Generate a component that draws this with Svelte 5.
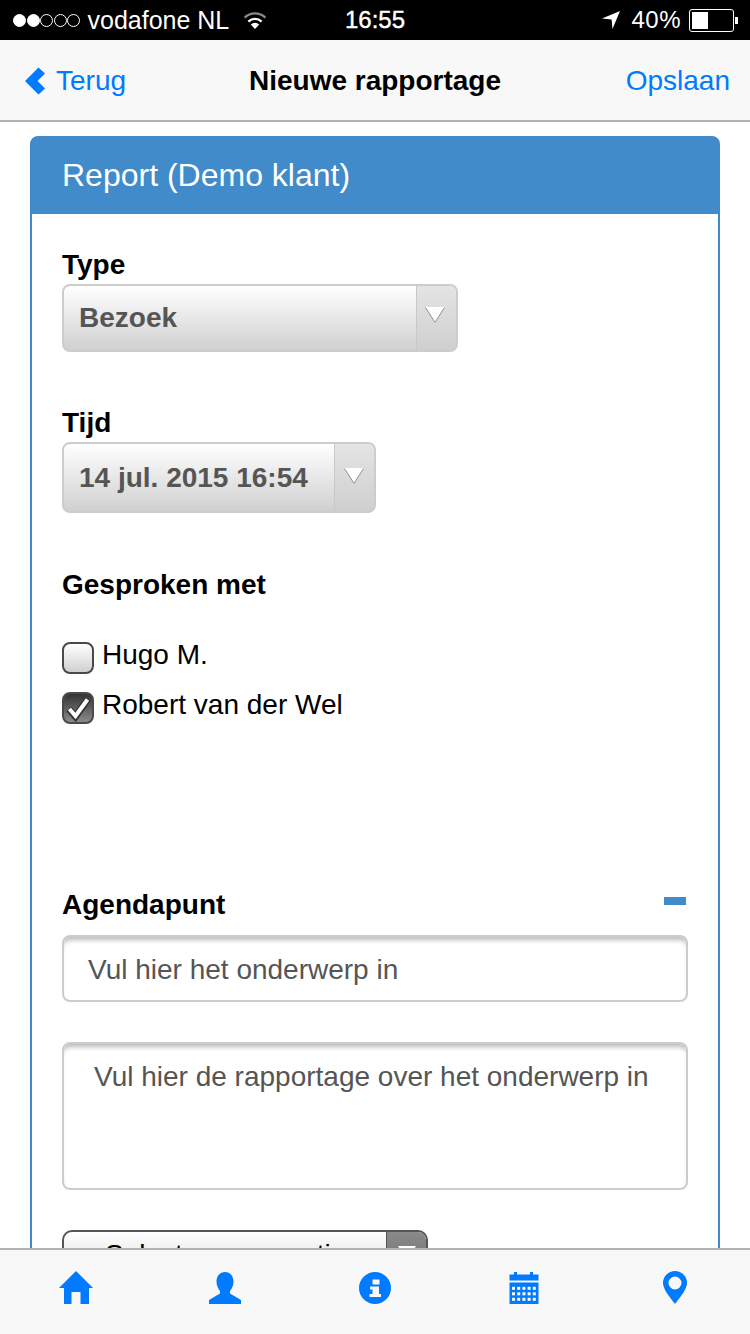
<script>
  let contacts = [
    { name: 'Hugo M.', checked: false },
    { name: 'Robert van der Wel', checked: true }
  ];
</script>

<main class="page">
  <div class="status">
    <div class="status-left">
      <span class="dot on"></span><span class="dot on"></span><span class="dot"></span><span class="dot"></span><span class="dot"></span>
      <span class="carrier">vodafone NL</span>
      <svg class="wifi" width="26" height="20" viewBox="0 0 26 20">
        <path d="M13 19l-4.200-4.600a6 6 0 0 1 8.400 0z" fill="#fff" />
        <path d="M6.400 11.600a9.400 9.400 0 0 1 13.200 0" fill="none" stroke="#fff" stroke-width="2.200" />
        <path d="M2.600 7.600a14.800 14.800 0 0 1 20.800 0" fill="none" stroke="#8a8a8a" stroke-width="2.200" />
      </svg>
    </div>
    <span class="clock">16:55</span>
    <div class="status-right">
      <svg width="18" height="20" viewBox="0 0 18 20"><path d="M18 1L10.500 19 9.600 9.600 0 8.600z" fill="#fff" /></svg>
      <span class="percent">40%</span>
      <div class="battery"><div class="charge"></div></div>
      <div class="nub"></div>
    </div>
  </div>

  <nav class="navbar">
    <a class="back" href="#terug">
      <svg width="22" height="28" viewBox="0 0 22 28"><path d="M14.500 0.500L21 6.500 13.500 14 21 21.500 14.500 27.500 1 14z" fill="#007aff" /></svg>
      <span>Terug</span>
    </a>
    <h1>Nieuwe rapportage</h1>
    <a class="save" href="#opslaan">Opslaan</a>
  </nav>

  <div class="content">
    <section class="card">
      <header>Report (Demo klant)</header>
      <div class="body">
        <label class="label first" for="type">Type</label>
        <div class="select type" id="type">
          <span class="value">Bezoek</span>
          <span class="arrow"><svg width="20" height="17" viewBox="0 0 20 17"><path d="M0 0h20L10 16.500z" fill="#fff" /><path d="M0.500 0.500L10 15.500 19.500 0.500" fill="none" stroke="#8b8b8b" stroke-width="1" /></svg></span>
        </div>

        <label class="label tijd" for="tijd">Tijd</label>
        <div class="select time" id="tijd">
          <span class="value">14 jul. 2015 16:54</span>
          <span class="arrow"><svg width="20" height="17" viewBox="0 0 20 17"><path d="M0 0h20L10 16.500z" fill="#fff" /><path d="M0.500 0.500L10 15.500 19.500 0.500" fill="none" stroke="#8b8b8b" stroke-width="1" /></svg></span>
        </div>

        <div class="label spoken">Gesproken met</div>
        <ul class="contacts">
          {#each contacts as c}
            <li>
              <span class="box" class:checked={c.checked}>
                {#if c.checked}
                  <svg width="28" height="28" viewBox="2 2 28 28"><path d="M7 17l6.500 7.500L26 7" fill="none" stroke="#333" stroke-width="7" /><path d="M7.500 17l6 7L25.500 7.500" fill="none" stroke="#fff" stroke-width="4" /></svg>
                {/if}
              </span>
              <span>{c.name}</span>
            </li>
          {/each}
        </ul>

        <div class="agenda-head">
          <span class="label">Agendapunt</span>
          <span class="minus"></span>
        </div>
        <div class="field input">Vul hier het onderwerp in</div>
        <div class="field area">Vul hier de rapportage over het onderwerp in</div>

        <div class="select dark">
          <span class="value">Selecteer een optie</span>
          <span class="arrow"><svg width="18" height="16" viewBox="0 0 18 16"><path d="M0 0h18L9 15z" fill="#fff" /></svg></span>
        </div>
      </div>
    </section>
  </div>

  <footer class="tabbar">
    <svg class="home" width="34" height="33" viewBox="0 0 34 33"><path d="M17 0L34 17H30V33H21.500V21H12.500V33H5V17H0z" fill="#007aff" /></svg>
    <svg width="32" height="32" viewBox="0 0 32 32"><path d="M16 0c5 0 8.500 4 8.500 9.500 0 4-1.800 7.500-3.500 9.500v2.500l11 6.500v4H0v-4l11-6.500V19c-1.700-2-3.500-5.500-3.500-9.500C7.500 4 11 0 16 0z" fill="#007aff" /></svg>
    <svg width="32" height="32" viewBox="0 0 32 32"><path fill-rule="evenodd" d="M16 0a16 16 0 1 1 0 32 16 16 0 0 1 0-32zM13.500 7.500v5h7v-5zM11 14.500v3h2.500v4.500H10.500v3h11.500v-3h-2V14.500z" fill="#007aff" /></svg>
    <svg class="cal" width="30" height="32" viewBox="0 0 30 32"><path fill-rule="evenodd" d="M0.500 2.500H5V0h3v2.500h13V0h3v2.500h5.500V8.500H0.500zM0.500 10.500h29V32H0.500z" fill="#007aff" /><g fill="#fff">
      {#each [0, 1, 2] as r}{#each [0, 1, 2, 3, 4] as k}<rect x={3 + k * 5.200} y={14.800 + r * 5.500} width="3" height="3" />{/each}{/each}
    </g></svg>
    <svg class="pin" width="24" height="33" viewBox="0 0 24 33"><path fill-rule="evenodd" d="M12 0a12 12 0 0 1 12 12c0 6-6.500 14-12 21C6.500 26 0 18 0 12A12 12 0 0 1 12 0zm0 5.500a6.500 6.500 0 1 0 0 13 6.500 6.500 0 0 0 0-13z" fill="#007aff" /></svg>
  </footer>
</main>

<style>
  :global(body) {
    margin: 0;
    background: #fff;
    font-family: "Liberation Sans", Arial, sans-serif;
  }
  .page {
    width: 750px;
    height: 1334px;
    display: flex;
    flex-direction: column;
    overflow: hidden;
  }

  .status {
    height: 40px;
    flex: none;
    background: #000;
    color: #fff;
    display: grid;
    grid-template-columns: 1fr auto 1fr;
    align-items: center;
    font-size: 25px;
  }
  .status-left {
    display: flex;
    align-items: center;
    padding-left: 13px;
  }
  .dot {
    width: 11px;
    height: 11px;
    border: 1px solid #fff;
    border-radius: 50%;
    margin-right: 0.500px;
  }
  .dot.on {
    background: #fff;
  }
  .carrier {
    margin-left: 7px;
  }
  .wifi {
    margin-left: 13px;
  }
  .clock {
    font-size: 24px;
    -webkit-text-stroke: 0.400px #fff;
  }
  .status-right {
    display: flex;
    align-items: center;
    justify-content: flex-end;
    padding-right: 12px;
  }
  .percent {
    margin-left: 11px;
    font-size: 24px;
    letter-spacing: 0.500px;
  }
  .battery {
    width: 39px;
    height: 17px;
    margin-left: 8px;
    padding: 2px;
    border: 1px solid #fff;
    border-radius: 3px;
  }
  .charge {
    width: 16px;
    height: 100%;
    background: #fff;
  }
  .nub {
    width: 3px;
    height: 7px;
    background: #fff;
    margin-left: 1px;
  }

  .navbar {
    height: 78px;
    padding-top: 2px;
    flex: none;
    background: #f8f8f8;
    border-bottom: 2px solid #b2b2b2;
    display: grid;
    grid-template-columns: 1fr auto 1fr;
    align-items: center;
    font-size: 28px;
  }
  .navbar a {
    color: #007aff;
    text-decoration: none;
  }
  .navbar h1 {
    margin: 0;
    font-size: 28px;
    font-weight: 700;
    color: #000;
  }
  .back {
    display: flex;
    align-items: center;
    gap: 10px;
    padding-left: 24px;
  }
  .save {
    justify-self: end;
    padding-right: 20px;
  }

  .content {
    flex: 1;
    min-height: 0;
    overflow: hidden;
    padding: 14px 30px 0;
  }
  .card {
    border: 2px solid #428bca;
    border-radius: 8px 8px 0 0;
  }
  .card header {
    height: 77px;
    margin: -1px -1px 0;
    padding-left: 31px;
    background: #428bca;
    border-radius: 6px 6px 0 0;
    color: #fff;
    font-size: 32px;
    display: flex;
    align-items: center;
  }
  .body {
    padding: 0 30px;
  }
  .label {
    display: block;
    font-size: 28px;
    font-weight: 700;
    color: #000;
    line-height: 32px;
  }
  .label.first {
    margin-top: 35px;
    margin-bottom: 3px;
  }
  .label.tijd {
    margin-top: 55px;
    margin-bottom: 3px;
  }
  .label.spoken {
    margin-top: 56px;
  }

  .select {
    display: flex;
    box-sizing: border-box;
    border: 2px solid #ccc;
    border-radius: 8px;
    overflow: hidden;
    background: linear-gradient(#fff, #d0d0d0);
  }
  .select .value {
    flex: 1;
    display: flex;
    align-items: center;
    padding-left: 15px;
    font-size: 28px;
    font-weight: 700;
    color: #555;
  }
  .select .arrow {
    width: 40px;
    display: flex;
    justify-content: center;
    padding: 21px 3px 0 0;
    box-sizing: border-box;
    background: linear-gradient(#e4e4e4, #cfcfcf);
    border-left: 1px solid #c8c8c8;
  }
  .select.type {
    width: 396px;
    height: 68px;
  }
  .select.time {
    width: 314px;
    height: 71px;
  }
  .select.time .arrow {
    padding: 24px 2px 0 0;
  }

  .contacts {
    list-style: none;
    margin: 41px 0 0;
    padding: 0;
    font-size: 28px;
    color: #000;
  }
  .contacts li {
    display: flex;
    align-items: center;
    gap: 8px;
    height: 32px;
    margin-bottom: 18px;
  }
  .contacts li span:last-child {
    margin-top: -6px;
  }
  .box {
    box-sizing: border-box;
    width: 32px;
    height: 32px;
    flex: none;
    border: 2px solid #4a4a4a;
    border-radius: 8px;
    background: linear-gradient(#fff, #d0d0d0);
    display: flex;
    align-items: center;
    justify-content: center;
  }
  .box.checked {
    background: linear-gradient(#333, #8a8a8a);
  }

  .agenda-head {
    margin-top: 165px;
    display: flex;
    justify-content: space-between;
  }
  .minus {
    width: 22px;
    height: 8px;
    margin: 8px 2px 0 0;
    background: #428bca;
  }
  .field {
    box-sizing: border-box;
    width: 626px;
    border: 2px solid #ccc;
    border-radius: 8px;
    box-shadow: inset 0 6px 5px -3px #bbb;
    font-size: 28px;
    color: #555;
  }
  .input {
    height: 67px;
    margin-top: 14px;
    padding: 2px 0 0 24px;
    display: flex;
    align-items: center;
  }
  .area {
    height: 148px;
    margin-top: 40px;
    padding: 17px 0 0 30px;
  }

  .select.dark {
    width: 366px;
    height: 60px;
    margin-top: 40px;
    border-color: #555;
    border-radius: 10px;
  }
  .select.dark .value {
    padding-left: 41px;
    color: #000;
    font-weight: 400;
    align-items: flex-start;
    padding-top: 7px;
  }
  .select.dark .arrow {
    padding: 14px 0 0 0;
    background: linear-gradient(#8a8a8a, #666);
    border-left-color: #555;
  }

  .tabbar {
    flex: none;
    background: #f8f8f8;
    border-top: 2px solid #b2b2b2;
    display: grid;
    grid-template-columns: repeat(5, 150px);
    justify-items: center;
    padding-top: 22px;
    height: 62px;
  }
  .home {
    margin: -1px 0 0 2px;
  }
  .cal {
    margin-right: 3px;
  }
  .pin {
    margin-top: -1px;
  }
</style>
